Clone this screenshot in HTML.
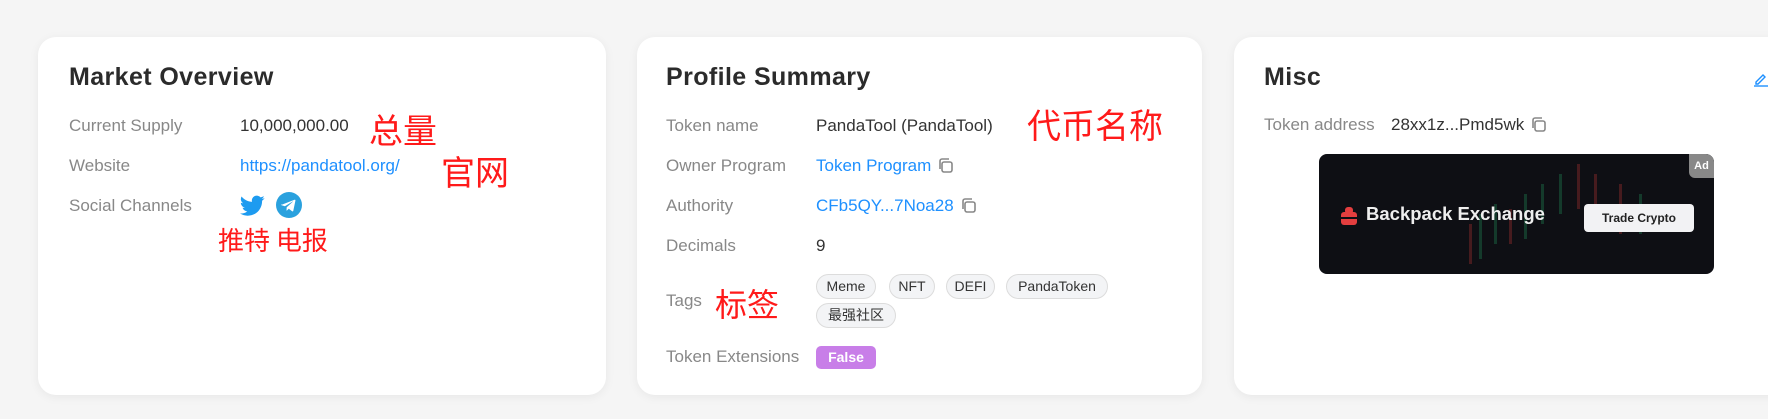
<!DOCTYPE html>
<html><head><meta charset="utf-8"><style>
*{margin:0;padding:0;box-sizing:border-box}
body{width:1768px;height:419px;background:#f5f5f5;font-family:"Liberation Sans","Noto Sans CJK SC",sans-serif;position:relative;overflow:hidden}
.card{position:absolute;top:37px;height:358px;background:#fff;border-radius:18px;box-shadow:0 2px 10px rgba(0,0,0,0.06)}
.t{position:absolute;font-size:25px;font-weight:bold;color:#2b2b2b;letter-spacing:0.4px}
.l{position:absolute;font-size:17px;color:#888;white-space:nowrap;transform:translateY(-50%)}
.v{position:absolute;font-size:17px;color:#333;white-space:nowrap;transform:translateY(-50%)}
.a{color:#1e90ff}
.r{position:absolute;color:#ff1a1a;white-space:nowrap;font-family:"Noto Sans CJK SC",sans-serif;line-height:1}
.cp{display:inline-block;vertical-align:-3px;margin-left:6px}
.chip{position:absolute;height:25px;border:1px solid #dcdcdc;background:#f3f4f6;border-radius:13px;font-size:14px;color:#333;line-height:23px;text-align:center}
</style></head><body>
<svg width="0" height="0" style="position:absolute"><defs><g id="cp"><rect x="5" y="5" width="10" height="10" rx="2" fill="none" stroke="#888" stroke-width="1.6"/><path d="M3 12 V4 a2 2 0 0 1 2-2 H12" fill="none" stroke="#888" stroke-width="1.6"/></g></defs></svg>

<div class="card" style="left:38px;width:568px">
 <div class="t" style="left:31px;top:26px">Market Overview</div>
 <div class="l" style="left:31px;top:89px">Current Supply</div>
 <div class="v" style="left:202px;top:89px">10,000,000.00</div>
 <div class="l" style="left:31px;top:129px">Website</div>
 <div class="v a" style="left:202px;top:129px">https://pandatool.org/</div>
 <div class="l" style="left:31px;top:169px">Social Channels</div>
 <svg style="position:absolute;left:202px;top:158px" width="25" height="22" viewBox="0 0 24 20"><path fill="#1d9bf0" d="M23.6 2.4c-.9.4-1.8.6-2.8.8 1-.6 1.8-1.6 2.1-2.7-.9.6-2 1-3.1 1.2A4.8 4.8 0 0 0 11.5 6C7.5 5.8 3.9 3.9 1.5.9a4.8 4.8 0 0 0 1.5 6.5c-.8 0-1.5-.2-2.2-.6 0 2.300 1.7 4.3 3.9 4.8-.7.2-1.5.2-2.2.1.6 1.9 2.4 3.3 4.5 3.4A9.7 9.7 0 0 1 0 17.1 13.7 13.7 0 0 0 7.4 19.3c8.9 0 13.8-7.4 13.8-13.8v-.6c1-.7 1.8-1.5 2.4-2.5z"/></svg>
 <svg style="position:absolute;left:238px;top:155px" width="26" height="26" viewBox="0 0 26 26"><circle cx="13" cy="13" r="13" fill="#2aa1de"/><path d="M6 12.6l12.5-4.8c.6-.2 1.1.1.9.9l-2.1 10c-.2.7-.6.8-1.2.5l-3.3-2.4-1.6 1.5c-.2.2-.3.3-.7.3l.2-3.3 6.1-5.5c.3-.2-.1-.4-.4-.2l-7.5 4.7-3.2-1c-.7-.2-.7-.7.3-1.1z" fill="#fff"/></svg>
 <div class="r" style="left:331px;top:75px;font-size:34px">总量</div>
 <div class="r" style="left:403px;top:117px;font-size:34px">官网</div>
 <div class="r" style="left:180px;top:190px;font-size:26px">推特 电报</div>
</div>

<div class="card" style="left:637px;width:565px">
 <div class="t" style="left:29px;top:26px">Profile Summary</div>
 <div class="l" style="left:29px;top:89px">Token name</div>
 <div class="v" style="left:179px;top:89px">PandaTool (PandaTool)</div>
 <div class="l" style="left:29px;top:129px">Owner Program</div>
 <div class="v a" style="left:179px;top:129px">Token Program<svg class="cp" width="17" height="17" viewBox="0 0 17 17"><use href="#cp"/></svg></div>
 <div class="l" style="left:29px;top:169px">Authority</div>
 <div class="v a" style="left:179px;top:169px">CFb5QY...7Noa28<svg class="cp" width="17" height="17" viewBox="0 0 17 17"><use href="#cp"/></svg></div>
 <div class="l" style="left:29px;top:209px">Decimals</div>
 <div class="v" style="left:179px;top:209px">9</div>
 <div class="l" style="left:29px;top:264px">Tags</div>
 <div class="chip" style="left:179px;top:237px;width:60px">Meme</div>
 <div class="chip" style="left:252px;top:237px;width:46px">NFT</div>
 <div class="chip" style="left:309px;top:237px;width:49px">DEFI</div>
 <div class="chip" style="left:369px;top:237px;width:102px">PandaToken</div>
 <div class="chip" style="left:179px;top:266px;width:80px">最强社区</div>
 <div class="l" style="left:29px;top:320px">Token Extensions</div>
 <div style="position:absolute;left:179px;top:309px;width:60px;height:23px;background:#c87ee8;border-radius:5px;color:#fff;font-weight:bold;font-size:14px;line-height:23px;text-align:center">False</div>
 <div class="r" style="left:390px;top:70px;font-size:34px">代币名称</div>
 <div class="r" style="left:78px;top:250px;font-size:32px">标签</div>
</div>

<div class="card" style="left:1234px;width:560px">
 <div class="t" style="left:30px;top:26px">Misc</div>
 <svg style="position:absolute;left:519px;top:34px" width="16" height="16" viewBox="0 0 16 16"><path d="M3 11l7-7 2 2-7 7H3z" fill="none" stroke="#1e90ff" stroke-width="1.4"/><path d="M1 15h14" stroke="#1e90ff" stroke-width="1.4"/></svg>
 <div class="l" style="left:30px;top:88px">Token address</div>
 <div class="v" style="left:157px;top:88px">28xx1z...Pmd5wk<svg class="cp" width="17" height="17" viewBox="0 0 17 17"><use href="#cp"/></svg></div>
 <div style="position:absolute;left:85px;top:117px;width:395px;height:120px;background:#0e0f14;border-radius:8px;overflow:hidden">
  <svg width="395" height="120" style="position:absolute;left:0;top:0">
   <g opacity="0.4">
    <rect x="150" y="70" width="3" height="40" fill="#9b2d2d"/><rect x="160" y="60" width="3" height="45" fill="#1e7a4e"/><rect x="175" y="50" width="3" height="40" fill="#1e7a4e"/><rect x="190" y="55" width="3" height="35" fill="#9b2d2d"/><rect x="205" y="40" width="3" height="45" fill="#1e7a4e"/><rect x="222" y="30" width="3" height="40" fill="#1e7a4e"/><rect x="240" y="20" width="3" height="40" fill="#1e7a4e"/><rect x="258" y="10" width="3" height="45" fill="#9b2d2d"/><rect x="275" y="20" width="3" height="35" fill="#9b2d2d"/><rect x="300" y="30" width="3" height="50" fill="#9b2d2d"/><rect x="320" y="40" width="3" height="40" fill="#1e7a4e"/>
   </g>
  </svg>
  <svg style="position:absolute;left:22px;top:53px" width="16" height="18" viewBox="0 0 16 18"><rect x="0" y="5" width="16" height="13" rx="3" fill="#e33e3f"/><rect x="4" y="0" width="8" height="7" rx="3" fill="#e33e3f"/><rect x="0" y="10" width="16" height="2" fill="#0e0f14"/></svg>
  <div style="position:absolute;left:47px;top:49px;color:#eee;font-weight:bold;font-size:18.5px">Backpack Exchange</div>
  <div style="position:absolute;left:265px;top:50px;width:110px;height:28px;background:#f2f2f4;border-radius:4px;font-weight:bold;font-size:12px;color:#222;text-align:center;line-height:28px">Trade Crypto</div>
  <div style="position:absolute;right:0;top:0;width:25px;height:24px;background:#888;border-radius:0 8px 0 6px;color:#fff;font-weight:bold;font-size:11px;text-align:center;line-height:24px">Ad</div>
 </div>
</div>
</body></html>
